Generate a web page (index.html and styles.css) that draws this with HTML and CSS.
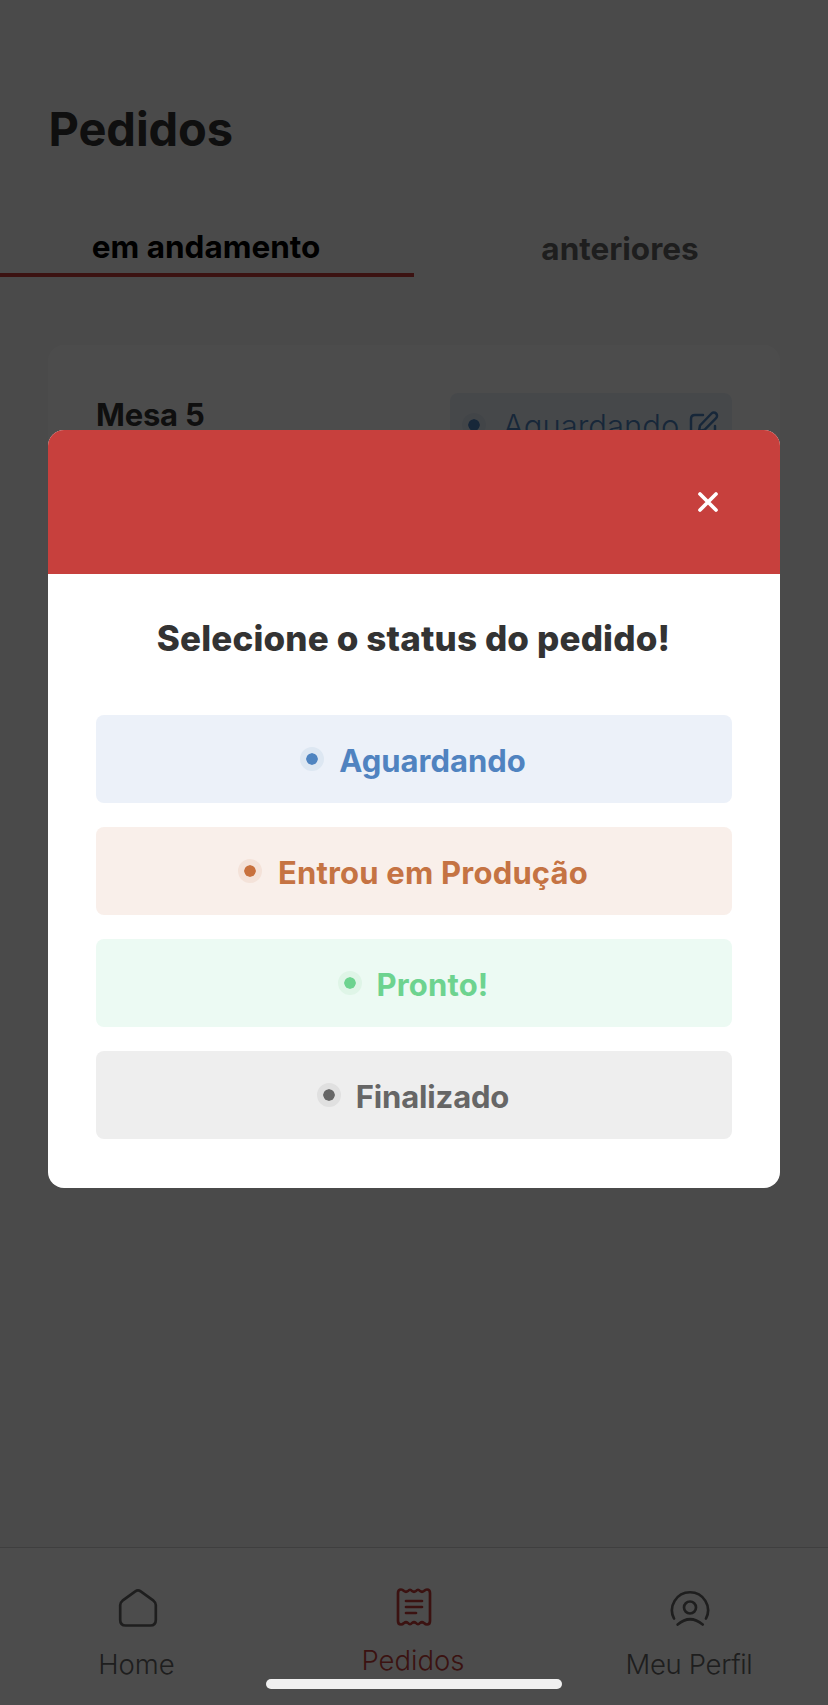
FILE: index.html
```html
<!DOCTYPE html>
<html lang="pt-BR">
<head>
<meta charset="utf-8">
<title>Pedidos</title>
<link rel="stylesheet" href="styles.css">
</head>
<body>
<div class="app">
  <main class="page">
    <h1 class="title">Pedidos</h1>
    <div class="tabs">
      <div class="tab tab-active">em andamento</div>
      <div class="tab">anteriores</div>
    </div>
    <section class="card">
      <h2 class="table-name">Mesa 5</h2>
      <div class="badge">
        <i class="dot"></i>
        <span class="badge-label">Aguardando</span>
        <svg class="edit" viewBox="0 0 30 30"><path d="M14 5H6Q2 5 2 9V24Q2 28 6 28H22Q26 28 26 24V16"/><path d="M11 15.500L22.500 3.500a3.200 3.200 0 0 1 4.600 4.600L15.500 19.800L10 21Z"/></svg>
      </div>
    </section>
  </main>
  <nav class="nav">
    <div class="nav-item nav-home">
      <svg class="nav-icon" viewBox="0 0 40 40"><path d="M17.300 3.400Q20 1.500 22.700 3.400L35.500 12.700Q37.800 14.500 37.800 17V32Q37.800 37.500 32.300 37.500H7.700Q2.200 37.500 2.200 32V17Q2.200 14.500 4.500 12.700Z"/></svg>
      <span>Home</span>
    </div>
    <div class="nav-item nav-active">
      <svg class="nav-icon" viewBox="0 0 40 40"><path d="M4 34V6Q4 2.500 7 2.500Q8.500 2.500 10 4Q12 5.500 14 4Q16 1.500 18 4Q20 5.500 22 4Q24 1.500 26 4Q28 5.500 30 4Q31.500 2.500 33 2.500Q36 2.500 36 6V34Q36 37.500 33 37.500Q31.500 37.500 30 36Q28 34.500 26 36Q24 38.500 22 36Q20 34.500 18 36Q16 38.500 14 36Q12 34.500 10 36Q8.500 37.500 7 37.500Q4 37.500 4 34ZM12 14H28M12 20H28M12 26H22"/></svg>
      <span>Pedidos</span>
    </div>
    <div class="nav-item nav-profile">
      <svg class="nav-icon" viewBox="0 0 40 40"><path d="M4 30.500A18 18 0 1 1 36 30.500M7.700 36.500Q20 26 32.700 36.500"/><circle cx="20" cy="19.500" r="6"/></svg>
      <span>Meu Perfil</span>
    </div>
  </nav>
  <div class="overlay">
    <div class="modal">
      <header class="modal-head">
        <svg class="close" viewBox="0 0 20 20"><path d="M2 2L18 18M18 2L2 18"/></svg>
      </header>
      <div class="modal-body">
        <h3 class="modal-title">Selecione o status do pedido!</h3>
        <div class="status blue"><i class="dot"></i><span>Aguardando</span></div>
        <div class="status orange"><i class="dot"></i><span>Entrou em Produção</span></div>
        <div class="status green"><i class="dot"></i><span>Pronto!</span></div>
        <div class="status gray"><i class="dot"></i><span>Finalizado</span></div>
      </div>
    </div>
  </div>
  <div class="indicator"></div>
</div>
</body>
</html>
```
FILE: styles.css
```css
* { box-sizing: border-box; }
body { margin: 0; font-family: Inter, "Liberation Sans", sans-serif; }
h1, h2, h3 { margin: 0; }
.app { position: relative; display: flex; flex-direction: column; width: 828px; height: 1705px; background: #f8f8f8; overflow: hidden; }
.page { flex: 1; padding-top: 98px; }
.title { padding-left: 48.500px; color: #333; font-size: 47px; line-height: 61px; font-weight: 700; letter-spacing: -0.100px; }
.tabs { display: flex; height: 56px; margin-top: 62px; }
.tab { flex: none; width: 50%; padding: 8px 2px 0 0; text-align: center; color: #666; font-size: 31.500px; line-height: 40px; font-weight: 700; }
.tab-active { padding: 6px 2px 0 0; border-bottom: 4px solid #c53f3b; color: #000; }
.card { display: flex; justify-content: space-between; height: 300px; margin: 68px 48px 0; padding: 48px; background: #fff; border-radius: 16px; }
.table-name { padding-top: 3px; color: #333; font-size: 31px; line-height: 38px; font-weight: 700; letter-spacing: -0.2px; }
.badge { display: flex; align-items: center; width: 282px; height: 64px; padding-left: 12px; border-radius: 8px; background: #ebf1f9; color: #4f84c0; font-size: 31px; font-weight: 300; }
.badge-label { margin-left: 17px; }
.edit { width: 30px; height: 30px; margin-left: 10px; fill: none; stroke: #4f84c0; stroke-width: 2.500; stroke-linejoin: round; stroke-linecap: round; }
.dot { flex: none; width: 24px; height: 24px; border: 6px solid; border-radius: 50%; background-clip: padding-box; background-color: #4f84c0; border-color: #dde7f2; }
.nav { display: flex; height: 158px; padding-top: 40px; border-top: 1px solid #d4d4d4; background: #fff; }
.nav-item { flex: 1; display: flex; flex-direction: column; align-items: center; color: #666; font-size: 27.500px; line-height: 34px; font-weight: 300; }
.nav-icon { width: 40px; height: 40px; margin-bottom: 19px; fill: none; stroke: currentColor; stroke-width: 2.700; stroke-linecap: round; stroke-linejoin: round; }
.nav-home span { padding-right: 3px; }
.nav-active { margin-top: -1px; color: #c53f3b; }
.nav-active .nav-icon { margin-bottom: 16px; }
.nav-active span { padding-right: 2px; }
.nav-profile span { padding-right: 2px; letter-spacing: -0.350px; }
.overlay { position: absolute; inset: 0; padding: 430px 48px 0; background: rgba(0, 0, 0, 0.7); }
.modal { height: 758px; overflow: hidden; border-radius: 16px; background: #fff; }
.modal-head { display: flex; justify-content: flex-end; height: 144px; padding: 62px 62px 0 0; background: #c7403d; }
.close { width: 20px; height: 20px; fill: none; stroke: #fff; stroke-width: 3.700; stroke-linecap: round; }
.modal-body { display: flex; flex-direction: column; gap: 24px; padding: 42px 48px 0; }
.modal-title { height: 75px; padding-right: 1px; text-align: center; color: #333; font-size: 35px; line-height: 45px; font-weight: 800; letter-spacing: 0.150px; white-space: nowrap; }
.status { display: flex; justify-content: center; height: 88px; padding: 31px 2px 0 0; border-radius: 8px; font-size: 31px; line-height: 30px; font-weight: 700; white-space: nowrap; }
.status .dot { margin: 1px 15px 0 0; }
.blue { color: #5083c0; background: #ecf1f9; }
.orange { color: #c57343; background: #f9efea; letter-spacing: 0.200px; }
.orange span { padding-left: 1px; }
.green { color: #6dd38f; background: #ecfaf3; letter-spacing: 0.150px; }
.gray { color: #666; background: #eee; letter-spacing: -0.150px; }
.orange .dot { background-color: #c8713e; border-color: #f4e2d9; }
.green .dot { background-color: #6dd38f; border-color: #dff5e7; }
.gray .dot { background-color: #666; border-color: #e0e0e0; }
.indicator { position: absolute; left: 266px; top: 1679px; width: 296px; height: 10px; border-radius: 5px; background: #f0f0f0; }
```
